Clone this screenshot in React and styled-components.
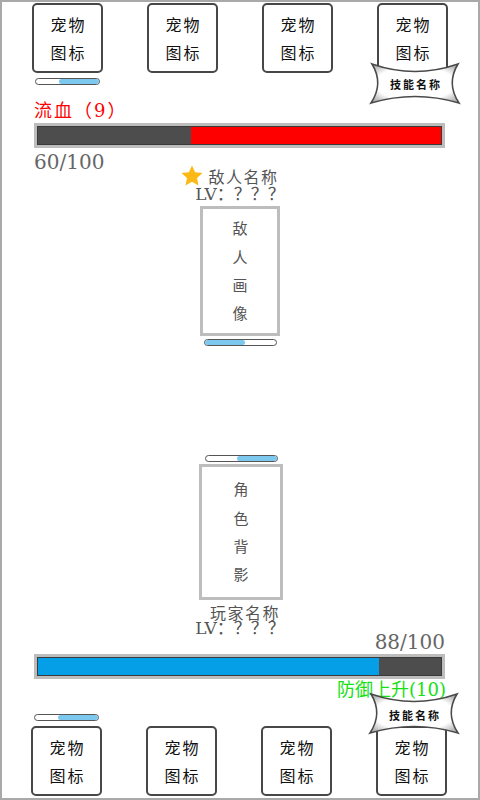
import React from "react";
import styled, { createGlobalStyle } from "styled-components";

const Global = createGlobalStyle`
  html, body { margin: 0; padding: 0; background: #fff; }
  body { font-family: "DejaVu Serif", "Noto Sans CJK SC", serif; }
  * { box-sizing: border-box; }
`;

const Screen = styled.div`
  width: 480px;
  height: 800px;
  border: 2px solid #a9a9a9;
  background: #fff;
  display: flex;
  flex-direction: column;
  overflow: hidden;
`;

const PetRow = styled.div`
  display: flex;
  justify-content: space-between;
  align-items: ${(p) => (p.$bottom ? "flex-end" : "flex-start")};
  padding: ${(p) => (p.$bottom ? "0 31px 2px 29px" : "1px 30px 0")};
  margin-top: ${(p) => (p.$bottom ? "14px" : "0")};
`;

const Slot = styled.div`
  position: relative;
  width: 71px;
  display: flex;
  flex-direction: column;
  align-items: flex-start;
`;

const PetBox = styled.div`
  width: 71px;
  height: 70px;
  border: 2px solid #474747;
  border-radius: 5px;
  background: #fff;
  display: flex;
  flex-direction: column;
  align-items: center;
  justify-content: center;
  font-family: "Noto Sans CJK SC", sans-serif;
  font-size: 16px;
  line-height: 28px;
  letter-spacing: 2px;
  text-indent: 2px;
  color: #111;
`;

const MiniBar = styled.div`
  width: ${(p) => p.$w}px;
  height: 7px;
  border: 1px solid #555;
  border-radius: 4px;
  background: #fff;
  display: flex;
  justify-content: ${(p) => (p.$side === "right" ? "flex-end" : "flex-start")};
  overflow: hidden;
  flex-shrink: 0;
  margin: ${(p) => p.$m || "0"};
  align-self: ${(p) => p.$self || "auto"};
`;

const MiniFill = styled.div`
  width: ${(p) => p.$fill}px;
  height: 100%;
  background: #7cc8ef;
  border-radius: 3px;
`;

const Badge = styled.div`
  position: absolute;
  left: -8px;
  top: ${(p) => p.$top}px;
  width: 92px;
  height: 43px;
  display: flex;
  align-items: center;
  justify-content: center;
  z-index: 2;
`;

const BadgeShape = styled.svg`
  position: absolute;
  inset: 0;
`;

const BadgeLabel = styled.span`
  position: relative;
  font-family: "Noto Sans CJK SC", sans-serif;
  font-size: 11px;
  font-weight: 700;
  line-height: 14px;
  letter-spacing: 2px;
  padding-left: 2px;
  padding-top: ${(p) => p.$dy || 0}px;
  color: #111;
`;

const StatusText = styled.div`
  color: ${(p) => p.$color};
  font-size: 18px;
  line-height: ${(p) => p.$lh}px;
  text-align: ${(p) => p.$align};
  letter-spacing: ${(p) => p.$ls || 0}px;
  margin-top: ${(p) => p.$mt}px;
  padding: 0 32px;
  white-space: nowrap;
`;

const HpFrame = styled.div`
  margin: ${(p) => p.$mt}px 33px 0 32px;
  height: 25px;
  border: 3px solid #bdbdbd;
  flex-shrink: 0;
`;

const HpTrack = styled.div`
  height: 100%;
  border: 1px solid #3a3a3a;
  background: #4d4d4d;
  display: flex;
  justify-content: ${(p) => (p.$side === "right" ? "flex-end" : "flex-start")};
`;

const HpFill = styled.div`
  height: 100%;
  background: ${(p) => p.$color};
`;

const HeaderGrid = styled.div`
  display: grid;
  grid-template-columns: 1fr auto 1fr;
  align-items: start;
  margin-top: ${(p) => p.$mt}px;
`;

const HpValue = styled.div`
  font-size: 20px;
  line-height: 24px;
  color: #666;
  justify-self: ${(p) => (p.$right ? "end" : "start")};
  padding: ${(p) => (p.$right ? "26px 33px 0 0" : "0 0 0 32px")};
`;

const CenterCell = styled.div`
  display: flex;
  flex-direction: column;
  align-items: center;
  padding-top: ${(p) => p.$pt || 0}px;
`;

const NameRow = styled.div`
  display: flex;
  align-items: center;
  gap: 5px;
  margin-right: ${(p) => p.$mr || 0}px;
  padding-left: ${(p) => p.$pl || 0}px;
`;

const Name = styled.span`
  font-family: "Noto Sans CJK SC", sans-serif;
  font-size: 16px;
  line-height: 16px;
  letter-spacing: 1.5px;
  color: #555;
  padding-top: ${(p) => p.$pt || 0}px;
`;

const Level = styled.div`
  font-size: 17px;
  line-height: 16px;
  color: #555;
  white-space: nowrap;
`;

const Portrait = styled.div`
  width: ${(p) => p.$w}px;
  height: ${(p) => p.$h}px;
  border: 3px solid #bdbdbd;
  align-self: center;
  margin: ${(p) => p.$m};
  display: flex;
  flex-direction: column;
  align-items: center;
  justify-content: center;
  font-family: "Noto Sans CJK SC", sans-serif;
  font-size: 15px;
  line-height: 28.3px;
  color: #555;
  flex-shrink: 0;
`;

const Spacer = styled.div`
  flex: 1;
`;

const Star = () => (
  <svg width="22" height="21" viewBox="1 1.2 22 20.6">
    <polygon
      points="12,1.5 15.1,8.3 22.5,9.1 17,14.1 18.5,21.5 12,17.8 5.5,21.5 7,14.1 1.5,9.1 8.9,8.3"
      fill="#fcb815"
    />
  </svg>
);

const SkillBadge = ({ top, dy, id }) => (
  <Badge $top={top}>
    <BadgeShape width="92" height="43" viewBox="0 0 92 43">
      <defs>
        <radialGradient id={id} cx="50%" cy="50%" r="62%">
          <stop offset="0%" stopColor="#ffffff" />
          <stop offset="72%" stopColor="#ffffff" />
          <stop offset="100%" stopColor="#b5b5b5" />
        </radialGradient>
      </defs>
      <path
        d="M3,2 Q46,17 89,2 Q77,21.5 90,41 Q46,28 2,41 Q15,21.5 3,2 Z"
        fill={`url(#${id})`}
        stroke="#4a4a4a"
        strokeWidth="1.6"
        strokeLinejoin="miter"
      />
    </BadgeShape>
    <BadgeLabel $dy={dy}>技能名称</BadgeLabel>
  </Badge>
);

const Pet = () => (
  <PetBox>
    <span>宠物</span>
    <span>图标</span>
  </PetBox>
);

export default function App() {
  return (
    <>
      <Global />
      <Screen>
        <PetRow>
          <Slot>
            <Pet />
            <MiniBar $w={65} $side="right" $m="5px 0 0 3px">
              <MiniFill $fill={40} />
            </MiniBar>
          </Slot>
          <Slot>
            <Pet />
          </Slot>
          <Slot>
            <Pet />
          </Slot>
          <Slot>
            <Pet />
            <SkillBadge top={59} id="badgeTop" />
          </Slot>
        </PetRow>

        <StatusText $color="#ff0000" $lh={22} $mt={15} $align="left" $ls={2}>
          流血（9）
        </StatusText>

        <HpFrame $mt={1}>
          <HpTrack $side="right">
            <HpFill $color="#ff0000" style={{ width: "62%" }} />
          </HpTrack>
        </HpFrame>

        <HeaderGrid $mt={2}>
          <HpValue>60/100</HpValue>
          <CenterCell $pt={15}>
            <NameRow $mr={20}>
              <Star />
              <Name $pt={1}>敌人名称</Name>
            </NameRow>
            <Level>LV：？？？</Level>
          </CenterCell>
          <div />
        </HeaderGrid>

        <Portrait $w={80} $h={130} $m="4px 0 0 0">
          <span>敌</span>
          <span>人</span>
          <span>画</span>
          <span>像</span>
        </Portrait>
        <MiniBar $w={73} $side="left" $m="3px 0 0 0" $self="center">
          <MiniFill $fill={40} />
        </MiniBar>

        <Spacer />

        <MiniBar $w={73} $side="right" $m="0 0 0 2px" $self="center">
          <MiniFill $fill={40} />
        </MiniBar>
        <Portrait $w={84} $h={136} $m="2px 0 0 2px">
          <span>角</span>
          <span>色</span>
          <span>背</span>
          <span>影</span>
        </Portrait>

        <HeaderGrid $mt={4}>
          <div />
          <CenterCell>
            <NameRow $pl={10}>
              <Name>玩家名称</Name>
            </NameRow>
            <Level>LV：？？？</Level>
          </CenterCell>
          <HpValue $right>88/100</HpValue>
        </HeaderGrid>

        <HpFrame $mt={0}>
          <HpTrack $side="left">
            <HpFill $color="#049fe6" style={{ width: "84.6%" }} />
          </HpTrack>
        </HpFrame>

        <StatusText $color="#16e016" $lh={20} $mt={1} $align="right">
          防御上升(10)
        </StatusText>

        <PetRow $bottom>
          <Slot>
            <MiniBar $w={65} $side="right" $m="0 0 5px 3px">
              <MiniFill $fill={40} />
            </MiniBar>
            <Pet />
          </Slot>
          <Slot>
            <Pet />
          </Slot>
          <Slot>
            <Pet />
          </Slot>
          <Slot>
            <Pet />
            <SkillBadge top={-34} dy={2} id="badgeBottom" />
          </Slot>
        </PetRow>
      </Screen>
    </>
  );
}
